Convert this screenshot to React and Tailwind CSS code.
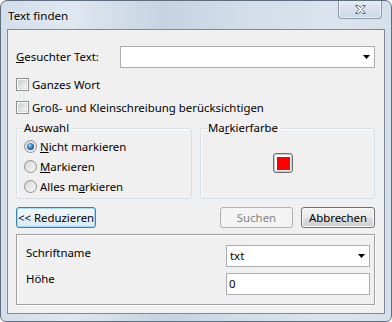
import React from 'react';

const font = { fontFamily: '"Noto Sans", "Open Sans", sans-serif' };

const Arrow = () => (
  <svg width="7" height="4" viewBox="0 0 7 4" className="shrink-0">
    <path d="M0 0h7L3.5 4z" fill="#000" />
  </svg>
);

const Combo = ({ value, className = '' }) => (
  <div className={`flex h-[22px] items-center justify-between border border-[#abadb3] bg-white pl-[3px] pr-[4px] ${className}`}>
    <span>{value}</span>
    <Arrow />
  </div>
);

const Checkbox = ({ children }) => (
  <label className="flex h-[13px] items-center gap-[3px]">
    <span className="flex h-[13px] w-[13px] items-center justify-center border border-[#8e8f8f] bg-white">
      <span className="h-[9px] w-[9px] border border-[#dadada] bg-[linear-gradient(135deg,#cbcfd5,#f7f7f7)]" />
    </span>
    <span className="leading-[16px]">{children}</span>
  </label>
);

const Radio = ({ checked, children }) => (
  <label className="flex h-[13px] items-center gap-[3px]">
    <span className="flex h-[13px] w-[13px] items-center justify-center rounded-full border border-[#8e8f8f] bg-[linear-gradient(135deg,#d4d6d9,#fafafa)]">
      {checked && (
        <span className="h-[7px] w-[7px] rounded-full bg-[radial-gradient(circle_at_40%_35%,#9fd4f7,#1c6bb0_55%,#0c3c72)]" />
      )}
    </span>
    <span className="leading-[16px]">{children}</span>
  </label>
);

const Group = ({ title, children, className = '' }) => (
  <div className={`relative h-[71px] rounded-[3px] border border-[#d5dfe5] shadow-[inset_1px_1px_0_#fff] ${className}`}>
    <span className="absolute left-[7px] top-[-9px] bg-[#f0f0f0] pr-[2px] leading-[16px]">{title}</span>
    {children}
  </div>
);

const btn = 'flex h-[21px] items-center justify-center whitespace-nowrap rounded-[3px] border leading-none';

export default function App() {
  return (
    <div
      style={font}
      className="flex h-[322px] w-[392px] flex-col overflow-hidden rounded-t-[7px] rounded-b-[6px] border border-[#5f6e7e] bg-[linear-gradient(90deg,#d3deea,#dfe7f0_18%,#c6d3e1_42%,#d2dde9_62%,#dbe4ee_85%,#d6e0eb)] text-[11.4px] text-black"
    >
      <div className="relative flex h-[28px] shrink-0 items-center pl-[7px]">
        <span className="pt-[2px] text-[11.6px] [text-shadow:0_0_6px_#fff]">Text finden</span>
        <div className="absolute right-[9px] top-[-1px] flex h-[19px] w-[44px] items-center justify-center rounded-b-[4px] border border-t-0 border-[#8a98a8] bg-[linear-gradient(180deg,#e8eef5,#d7e1ec_50%,#cbd7e4)] shadow-[inset_0_0_0_1px_rgba(255,255,255,0.6)]">
          <svg width="13" height="11" viewBox="0 0 13 11">
            <path
              d="M1.5 1.5h3l2 2.2 2-2.2h3l-3.5 4 3.5 4h-3l-2-2.2-2 2.2h-3l3.5-4z"
              fill="#fff"
              stroke="#5d6a78"
              strokeWidth="1"
              strokeLinejoin="round"
            />
          </svg>
        </div>
      </div>

      <div className="mx-[6px] flex h-[285px] shrink-0 flex-col border border-[#7d8c9c] bg-[#f0f0f0] pl-[8px] pr-[9px] pt-[16px]">
        <div className="flex h-[22px] items-center">
          <span className="w-[104px] shrink-0">
            <u>G</u>esuchter Text:
          </span>
          <Combo value="" className="flex-1" />
        </div>

        <div className="mt-[10px]">
          <Checkbox>Ganzes Wort</Checkbox>
        </div>
        <div className="mt-[10px]">
          <Checkbox>Groß- und Kleinschreibung berücksichtigen</Checkbox>
        </div>

        <div className="mt-[14px] flex gap-[8px]">
          <Group title="Auswahl" className="w-[176px]">
            <div className="flex flex-col gap-[7px] pl-[7px] pt-[11px]">
              <Radio checked>
                <u>N</u>icht markieren
              </Radio>
              <Radio>
                <u>M</u>arkieren
              </Radio>
              <Radio>
                Alles m<u>a</u>rkieren
              </Radio>
            </div>
          </Group>
          <Group
            title={
              <>
                Ma<u>r</u>kierfarbe
              </>
            }
            className="flex-1"
          >
            <div className="pl-[72px] pt-[24px]">
              <div className="flex h-[20px] w-[20px] items-center justify-center rounded-[3px] border border-[#707070] bg-white shadow-[inset_0_0_0_1px_#c8c8c8]">
                <div className="h-[13px] w-[13px] bg-[#ff0000]" />
              </div>
            </div>
          </Group>
        </div>

        <div className="mt-[8px] flex gap-[8px]">
          <button
            className={`${btn} w-[80px] border-[#3c7fb1] bg-[linear-gradient(180deg,#f4f9fc,#e7f2f9_50%,#d4e8f5)] shadow-[inset_0_0_0_1px_#a8dcf8]`}
          >
            &lt;&lt; Reduzieren
          </button>
          <button className={`${btn} ml-auto w-[73px] border-[#adb2b5] bg-[#f4f4f4] text-[#838383]`}>Suchen</button>
          <button
            className={`${btn} w-[74px] border-[#707070] bg-[linear-gradient(180deg,#f2f2f2,#ebebeb_50%,#dddddd_51%,#cfcfcf)] shadow-[inset_0_0_0_1px_#fcfcfc]`}
          >
            Abbrechen
          </button>
        </div>

        <div className="mt-[6px] grid h-[71px] grid-cols-[200px_1fr] content-start gap-y-[6px] border border-[#a0a0a0] pl-[9px] pr-[4px] pt-[10px] shadow-[inset_1px_1px_0_#fff,1px_1px_0_#fff]">
          <span className="self-start leading-[16px]">Schriftname</span>
          <Combo value="txt" />
          <span className="mt-[-2px] self-start leading-[16px]">Höhe</span>
          <div className="flex h-[22px] items-center border border-[#abadb3] bg-white pl-[2px]">0</div>
        </div>
      </div>
    </div>
  );
}
